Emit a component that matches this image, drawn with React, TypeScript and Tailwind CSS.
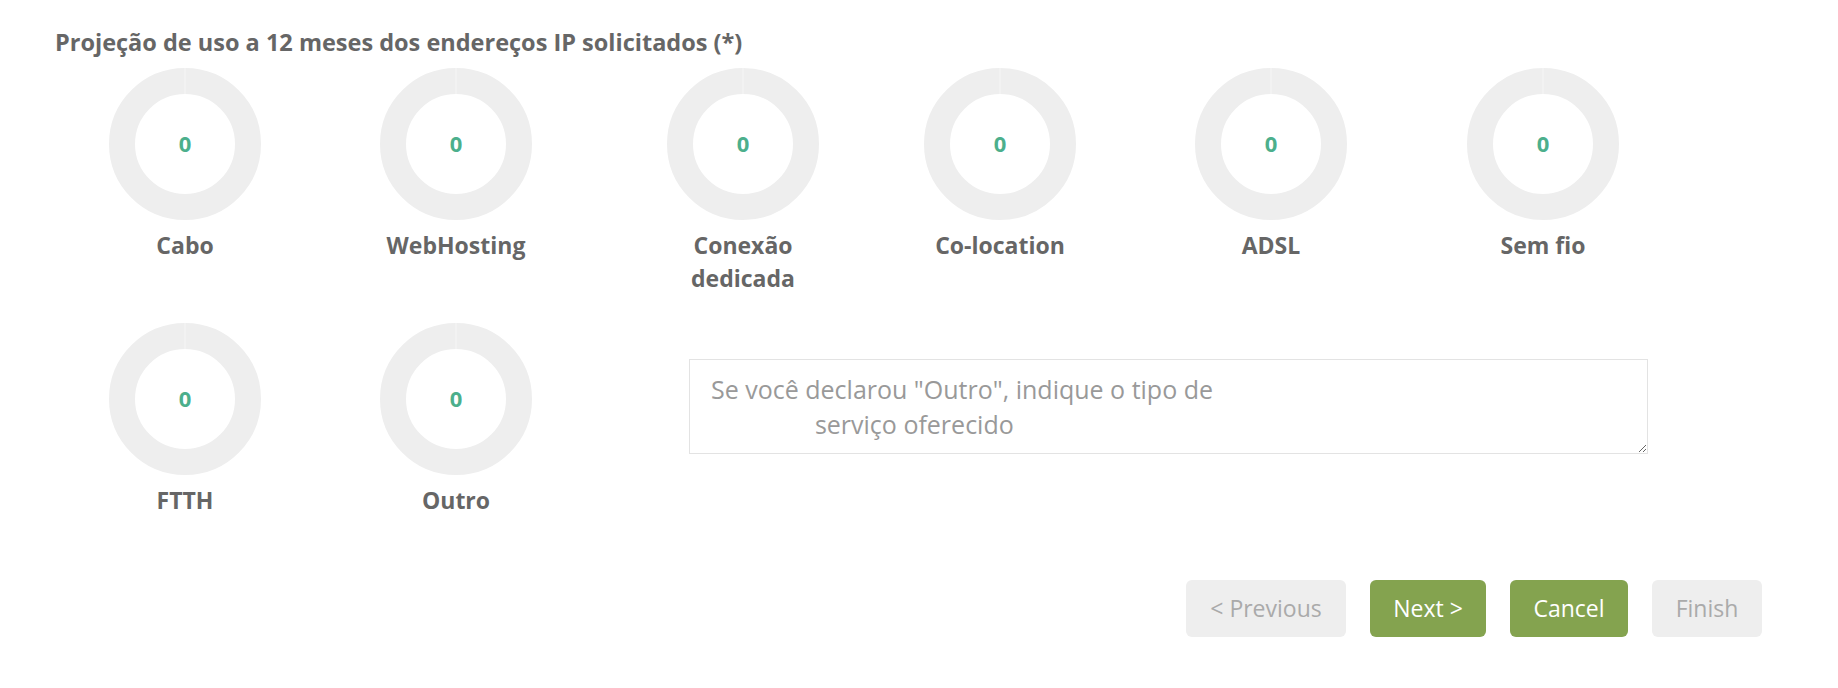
const items1 = [
  { label: "Cabo", ml: "ml-0" },
  { label: "WebHosting", ml: "ml-[119px]" },
  { label: "Conexão dedicada", ml: "ml-[135px]" },
  { label: "Co-location", ml: "ml-[105px]" },
  { label: "ADSL", ml: "ml-[119px]" },
  { label: "Sem fio", ml: "ml-[120px]" },
];

const items2 = [
  { label: "FTTH", ml: "ml-0" },
  { label: "Outro", ml: "ml-[119px]" },
];

function Donut({ label, ml }: { label: string; ml: string }) {
  return (
    <div className={`flex w-[152px] flex-col items-center ${ml}`}>
      <div className="relative h-[152px] w-[152px]">
        <svg width="152" height="152" viewBox="0 0 152 152">
          <circle cx="76" cy="76" r="63" fill="none" stroke="#eeeeee" strokeWidth="26" />
          <line x1="76" y1="0" x2="76" y2="26" stroke="#f6f6f6" strokeWidth="1" />
        </svg>
        <div className="absolute inset-0 flex items-center justify-center pb-[2px] text-[22px] font-bold text-[#4caf8c]">
          0
        </div>
      </div>
      <p className="mt-[9px] text-center text-[23px] font-bold leading-[33px] text-[#666666]">
        {label}
      </p>
    </div>
  );
}

function Button({ children, active, w }: { children: string; active?: boolean; w: string }) {
  return (
    <button
      className={
        active
          ? `h-[57px] ${w} rounded-[6px] bg-[#84a34f] text-center text-[23px] text-white`
          : `h-[57px] ${w} rounded-[6px] bg-[#eeeeee] text-center text-[23px] text-[#aaaaaa]`
      }>
      {children}
    </button>
  );
}

export default function App() {
  return (
    <div className="min-h-[688px] w-full bg-white pt-[27px] font-['Open_Sans',sans-serif]">
      <div className="pl-[55px]">
        <h3 className="text-[23.5px] font-bold leading-[30px] text-[#666666]">
          Projeção de uso a 12 meses dos endereços IP solicitados (*)
        </h3>
      </div>

      <div className="mt-[11px] flex items-start pl-[109px]">
        {items1.map((it) => (
          <Donut key={it.label} label={it.label} ml={it.ml} />
        ))}
      </div>

      <div className="mt-[28px] flex items-start pl-[109px]">
        {items2.map((it) => (
          <Donut key={it.label} label={it.label} ml={it.ml} />
        ))}
        <textarea
          className="ml-[157px] mt-[36px] h-[95px] w-[959px] border border-[#e3e3e3] px-[21px] pt-[12px] text-[25px] leading-[35px] text-[#555] outline-none placeholder:text-[#999999]"
          placeholder={'Se você declarou "Outro", indique o tipo de\n                serviço oferecido'}
        />
      </div>

      <div className="mt-[63px] flex justify-end gap-[24px] pr-[76px]">
        <Button w="w-[160px]">{"< Previous"}</Button>
        <Button active w="w-[116px]">{"Next >"}</Button>
        <Button active w="w-[118px]">Cancel</Button>
        <Button w="w-[110px]">Finish</Button>
      </div>
    </div>
  );
}
